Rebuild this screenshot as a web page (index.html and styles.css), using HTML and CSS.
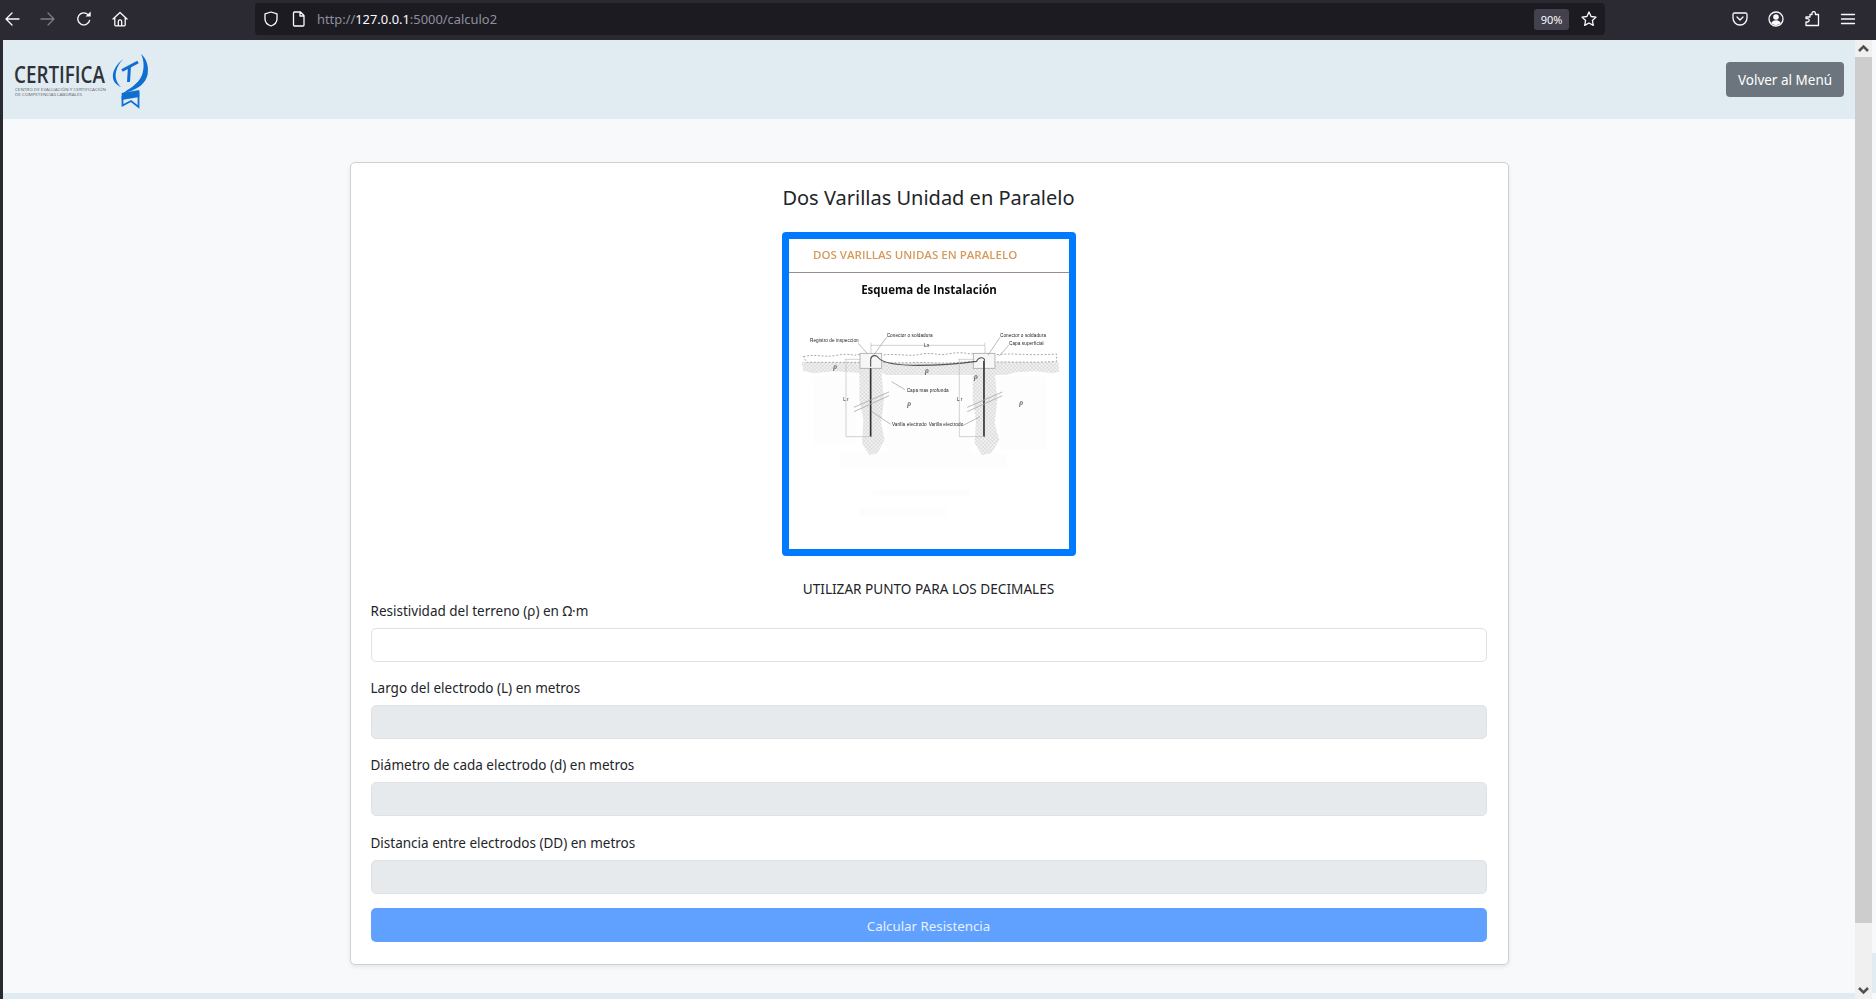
FILE: index.html
```html
<!DOCTYPE html>
<html lang="es">
<head>
<meta charset="utf-8">
<title>Dos Varillas Unidad en Paralelo</title>
<link rel="stylesheet" href="styles.css">
</head>
<body>
<div class="toolbar">
  <div class="nav-group">
    <span class="tool"><svg viewBox="0 0 16 16" class="ico"><path d="M15 8H2M8 2 2 8l6 6"/></svg></span>
    <span class="tool dim"><svg viewBox="0 0 16 16" class="ico"><path d="M1 8h13M8 2l6 6-6 6"/></svg></span>
    <span class="tool"><svg viewBox="0 0 16 16" class="ico"><path d="M13.6 9.500A6 6 0 1 1 12 3.600"/><path class="solid" d="M9.500 5.600h5.200V.5z"/></svg></span>
    <span class="tool"><svg viewBox="0 0 16 16" class="ico"><path d="M1 8 8 1.500 15 8M2.800 6.800V14a.8.8 0 0 0 .8.8h8.800a.8.8 0 0 0 .8-.8V6.800M6.300 14.800v-4.300a1.700 1.700 0 0 1 3.400 0v4.300"/></svg></span>
  </div>
  <div class="urlbar">
    <span class="url-ico"><svg viewBox="0 0 16 16" class="ico"><path d="M8 1 2 2.800V8c0 3.500 2.600 5.800 6 7 3.400-1.200 6-3.500 6-7V2.800z"/></svg></span>
    <span class="url-ico page-ico"><svg viewBox="0 0 16 16" class="ico"><path d="M3.500 1h6l3.500 3.500V14a1 1 0 0 1-1 1H3.500a1 1 0 0 1-1-1V2a1 1 0 0 1 1-1zM9 1v4h4"/></svg></span>
    <span class="url"><span class="url-dim">http://</span>127.0.0.1<span class="url-dim">:5000/calculo2</span></span>
    <span class="zoom-badge">90%</span>
    <span class="star"><svg viewBox="0 0 16 16" class="ico"><path d="m8 1 2.100 4.500 4.900.6-3.600 3.400.9 4.900L8 12l-4.300 2.400.9-4.900L1 6.100l4.900-.6z"/></svg></span>
  </div>
  <div class="nav-group">
    <span class="tool"><svg viewBox="0 0 16 16" class="ico"><path d="M2.300 2h11.400A1.300 1.300 0 0 1 15 3.300V7A7 7 0 0 1 1 7V3.300A1.300 1.300 0 0 1 2.300 2zM5 6l3 3 3-3"/></svg></span>
    <span class="tool"><svg viewBox="0 0 16 16" class="ico"><circle cx="8" cy="8" r="7"/><circle class="solid" cx="8" cy="6" r="2.800"/><path class="solid" d="M3.200 12.200c.8-2 2.600-3 4.800-3s4 1 4.800 3c-1.300 1.200-3 1.800-4.800 1.800s-3.500-.6-4.800-1.800z"/></svg></span>
    <span class="tool"><svg viewBox="0 0 16 16" class="ico"><path d="M6 3.500h2V2.300a1.700 1.700 0 0 1 3.400 0v1.200h3.100V14.500H2V11h1.500a1.700 1.700 0 0 0 0-3.400H2V6h4z"/></svg></span>
    <span class="tool"><svg viewBox="0 0 16 16" class="ico"><path d="M1.500 3.500h13M1.500 8h13M1.500 12.500h13"/></svg></span>
  </div>
</div>

<div class="viewport">
  <div class="page">
    <header class="site-header">
      <svg class="logo" viewBox="0 0 150 60" aria-label="CERTIFICA">
        <text x="11" y="32.700" class="logo-word" textLength="91" lengthAdjust="spacingAndGlyphs">CERTIFICA</text>
        <text x="12" y="40.500" class="logo-sub" textLength="91" lengthAdjust="spacingAndGlyphs">CENTRO DE EVALUACIÓN Y CERTIFICACIÓN</text>
        <text x="12" y="45.800" class="logo-sub" textLength="67" lengthAdjust="spacingAndGlyphs">DE COMPETENCIAS LABORALES</text>
        <path class="logo-blue" d="M120.500 9C113 14 109 22 110 28c.5 3 2 6 8 9-5-5-6-10-5-15 1-5 4-10 7.500-13z"/>
        <path class="logo-blue" d="M138 4c6 5 8 13 6.500 21-2 8-8.500 13-16.500 16l-9 3c6-5 16-9 20-19 2.500-7 2-15-1-21z"/>
        <path class="logo-stroke" d="M119 20.500 135 12M126.500 16l-1 16"/>
        <path class="logo-blue" d="M118.700 43 136.300 40v7l-17.600 3z"/>
        <path class="logo-ribbon" d="M119.500 46v9.500l8.500-4.500 7.500 6V42"/>
      </svg>
      <a class="menu-btn">Volver al Menú</a>
    </header>

    <main class="content">
      <section class="card">
        <h4 class="card-title">Dos Varillas Unidad en Paralelo</h4>
        <div class="figure">
          <svg class="scheme" viewBox="0 0 280 310" role="img" aria-label="Esquema de Instalación">
            <defs>
              <filter id="soft" x="-5%" y="-5%" width="110%" height="110%"><feGaussianBlur stdDeviation="0.3"/></filter>
              <filter id="softer" x="-5%" y="-5%" width="110%" height="110%"><feGaussianBlur stdDeviation="0.4"/></filter>
              <pattern id="hatch" width="8" height="8" patternUnits="userSpaceOnUse" patternTransform="rotate(45)">
                <rect width="8" height="8" fill="#f2f2f2"/>
                <path d="M0 0H8M0 0V8" stroke="#b4b4b4" stroke-width="1.400"/>
              </pattern>
            </defs>
            <g filter="url(#soft)">
              <text x="24" y="20" class="sch-head">DOS VARILLAS UNIDAS EN PARALELO</text>
              <path d="M0 33.500H280" stroke="#9c8c92" stroke-width="1"/>
              <text x="140" y="55" class="sch-title">Esquema de Instalación</text>
            </g>
            <g filter="url(#softer)" transform="translate(-19 81) scale(.3333)">
              <path d="M130 170h130v200h-130zM350 170h250v230H350zM690 170h140v220H690zM210 400h500v40H210zM310 510h290v20H310zM270 560h260v30H270z" fill="#fdfdfd"/>
              <path fill="url(#hatch)" d="M95 125h770l3 30-20 5-50-6-60 3-30 8H350l-20-8-60 2-80-5-60 6-30-8z"/>
              <path fill="url(#hatch)" d="M268 150h66l8 90-8 70 10 50-22 40-24 5-22-35 4-70-12-60zM608 150h66l8 90-8 70 14 50-24 40-28 5-22-35 4-70-10-60z"/>
              <path d="M100 110c40-10 60 4 100-4s50 4 70-3l70 2c40-6 70 6 110-2s50 6 90-2 60 4 70 0l70 3c50-6 90 4 180-2v22c-60 4-100 2-150 2s-90-4-140 1-100-1-150 1-100-3-120-1H110z" fill="#fff" stroke="#999" stroke-width="2.500" stroke-dasharray="6 5"/>
              <rect x="270" y="100" width="65" height="45" fill="#f6f6f6" stroke="#aaa" stroke-width="2.500"/>
              <rect x="610" y="100" width="65" height="45" fill="#f6f6f6" stroke="#aaa" stroke-width="2.500"/>
              <path d="M302 145V350M642 122V350" stroke="#333" stroke-width="5" fill="none"/>
              <path d="M302 140v-22c2-12 16-16 24-4 14 18 60 22 120 22s130-6 174-12c6-14 24-14 24-2" stroke="#555" stroke-width="3.500" fill="none"/>
              <path d="M252 275l105-48M252 262l105-46M592 275l105-48M592 262l105-46" stroke="#aaa" stroke-width="2.500"/>
              <path d="M303 76h342M303 68v34M645 68v34M228 118V350H302M568 118V350H642M225 118h48M565 118h48" stroke="#bbb" stroke-width="2" fill="none"/>
              <path d="M265 70l28 32M350 52l-38 52M690 52l-36 54M716 76l-28 32M365 185l40 24M306 275l56 38M630 290l-50 26" stroke="#999" stroke-width="2" fill="none"/>
              <g class="sch-label">
                <text x="120" y="65" textLength="146">Registro de inspeccion</text>
                <text x="350" y="52" textLength="138">Conector o soldadura</text>
                <text x="690" y="52" textLength="138">Conector o soldadura</text>
                <text x="717" y="75" textLength="104">Capa superficial</text>
                <text x="410" y="215" textLength="126">Capa mas profunda</text>
                <text x="366" y="317" textLength="104">Varilla electrodo</text>
                <text x="476" y="317" textLength="104">Varilla electrodo</text>
                <text x="462" y="82" textLength="16">Lx</text>
                <text x="220" y="243" textLength="16">Lr</text>
                <text x="561" y="243" textLength="16">Lr</text>
              </g>
              <g class="sch-rho">
                <text x="190" y="146">ρ</text><text x="465" y="158">ρ</text><text x="612" y="176">ρ</text><text x="412" y="258">ρ</text><text x="748" y="256">ρ</text>
              </g>
            </g>
          </svg>
        </div>
        <p class="note">UTILIZAR PUNTO PARA LOS DECIMALES</p>
        <form class="calc-form">
          <div class="field">
            <label class="field-label" for="rho">Resistividad del terreno (ρ) en Ω·m</label>
            <input class="field-input" id="rho" type="text">
          </div>
          <div class="field">
            <label class="field-label" for="largo">Largo del electrodo (L) en metros</label>
            <input class="field-input" id="largo" type="text" disabled>
          </div>
          <div class="field">
            <label class="field-label" for="diam">Diámetro de cada electrodo (d) en metros</label>
            <input class="field-input" id="diam" type="text" disabled>
          </div>
          <div class="field">
            <label class="field-label" for="dist">Distancia entre electrodos (DD) en metros</label>
            <input class="field-input" id="dist" type="text" disabled>
          </div>
          <button class="submit-btn" type="button">Calcular Resistencia</button>
        </form>
      </section>
    </main>
    <div class="site-footer"></div>
  </div>
  <div class="scrollbar">
    <span class="sb-btn"><svg viewBox="0 0 17 17" class="sb-ico"><path d="M4 11l4.500-4.500L13 11"/></svg></span>
    <span class="sb-thumb"></span>
    <span class="sb-track"></span>
    <span class="sb-btn sb-down"><svg viewBox="0 0 17 17" class="sb-ico"><path d="M4 6l4.500 4.500L13 6"/></svg></span>
  </div>
  <div class="gutter"><span class="gutter-fill"></span><span class="gutter-blue"></span><span class="gutter-end"></span></div>
</div>
</body>
</html>
```

FILE: styles.css
```css
* { box-sizing: border-box; }
html, body { margin: 0; height: 100%; overflow: hidden; }
body {
  display: flex;
  flex-direction: column;
  background: #2b2a33;
  font-family: "Noto Sans", "Open Sans", sans-serif;
  color: #212529;
}

/* browser chrome */
.toolbar {
  flex: 0 0 40px;
  display: flex;
  align-items: center;
  padding: 0 16px 2px 0;
  background: #2b2a33;
  color: #fbfbfe;
}
.nav-group { display: flex; gap: 12px; align-items: center; }
.tool { width: 24px; height: 24px; display: flex; align-items: center; justify-content: center; }
.tool.dim { opacity: .4; }
.ico { width: 16px; height: 16px; fill: none; stroke: #fbfbfe; stroke-width: 1.300; stroke-linejoin: round; stroke-linecap: round; }
.ico .solid { fill: #fbfbfe; stroke: none; }
.urlbar {
  flex: 1;
  height: 32px;
  margin: 0 123px;
  padding: 0 0 0 8px;
  display: flex;
  align-items: center;
  background: #1c1b22;
  border-radius: 4px;
  font-size: 12.900px;
}
.url-ico { width: 16px; height: 16px; display: flex; }
.page-ico { margin-left: 12px; }
.url { flex: 1; margin-left: 10px; color: #fbfbfe; }
.url-dim { color: #8f8f9d; }
.zoom-badge {
  width: 35px;
  height: 21px;
  background: #42414d;
  border-radius: 3px;
  font-size: 11px;
  line-height: 21px;
  text-align: center;
}
.star { width: 16px; height: 16px; margin: 0 8px 0 12px; display: flex; }

/* page frame */
.viewport { flex: 1; min-height: 0; display: flex; padding-left: 3px; }
.page { flex: 1; min-width: 0; display: flex; flex-direction: column; background: #f8f9fa; }
.site-header {
  flex: 0 0 79px;
  display: flex;
  align-items: center;
  justify-content: space-between;
  padding: 0 11px 0 0;
  background: #e0ebf2;
}
.logo { width: 150px; height: 60px; display: block; }
.logo-word { font: 600 23px "Open Sans", sans-serif; fill: #2f3338; }
.logo-sub { font: 400 4px "Open Sans", sans-serif; fill: #666; }
.logo-blue { fill: #0f6fd1; }
.logo-stroke { fill: none; stroke: #0f6fd1; stroke-width: 3; }
.logo-ribbon { fill: none; stroke: #0f6fd1; stroke-width: 1.800; }
.menu-btn {
  height: 35px;
  width: 118px;
  display: flex;
  align-items: center;
  justify-content: center;
  background: #6c757d;
  color: #fff;
  border-radius: 4px;
  font-size: 13.500px;
}
.content { flex: 1; padding: 43px 0 28px; }
.site-footer { flex: 1 0 6px; background: #e0ebf2; }

/* card */
.card {
  width: 1159px;
  margin: 0 auto;
  padding: 20px 21px 22px 20px;
  background: #fff;
  border: 1px solid #cfd0d1;
  border-radius: 5px;
  box-shadow: 0 2px 4px rgba(0, 0, 0, .08);
}
.card-title {
  margin: 0 0 19px;
  font-size: 20px;
  font-weight: 400;
  line-height: 30px;
  text-align: center;
}
.figure { display: flex; justify-content: center; }
.scheme {
  width: 294px;
  height: 324px;
  display: block;
  background: #fff;
  border: 7px solid #007bff;
  border-radius: 4px;
}
.sch-head { font: 600 11.500px "Open Sans", sans-serif; fill: #d69a5c; }
.sch-title { font: 700 11.500px "Open Sans", sans-serif; fill: #111; text-anchor: middle; }
.sch-label text { font: 400 14px "Liberation Sans", sans-serif; fill: #222; }
.sch-rho text { font: italic 700 22px "Liberation Serif", serif; fill: #666; }
.note {
  margin: 22px 0 0;
  font-size: 13.600px;
  line-height: 22px;
  text-align: center;
}
.field { margin-bottom: 15.200px; }
.field-label { display: block; margin-bottom: 6px; font-size: 13.500px; line-height: 22px; }
.field-input {
  display: block;
  width: 100%;
  height: 34px;
  padding: 0 12px;
  background: #fff;
  border: 1px solid #dfe2e5;
  border-radius: 5px;
  font: inherit;
  outline: none;
}
.field-input:disabled { background: #e7eaed; border-color: #e0e3e6; }
.field:last-of-type { margin-bottom: 14px; }
.submit-btn {
  display: block;
  width: 100%;
  height: 34px;
  padding: 2px 0 0;
  background: #60a1ff;
  border: 0;
  border-radius: 5px;
  color: #e8f1ff;
  font: inherit;
  font-size: 13.300px;
}

/* scrollbar */
.scrollbar { flex: 0 0 17px; display: flex; flex-direction: column; background: #f0f0f0; }
.sb-btn { flex: 0 0 17px; display: flex; }
.sb-down { margin-top: auto; }
.sb-ico { width: 17px; height: 17px; fill: none; stroke: #505050; stroke-width: 2.500; }
.sb-thumb { flex: 0 0 866px; background: #cdcdcd; }
.sb-track { flex: 1; }
.gutter { flex: 0 0 4px; display: flex; flex-direction: column; }
.gutter-fill { flex: 0 0 913px; background: #f8f9fa; }
.gutter-blue { flex: 0 0 40px; background: #e0ebf2; }
.gutter-end { flex: 1; background: #f8f9fa; }
```
